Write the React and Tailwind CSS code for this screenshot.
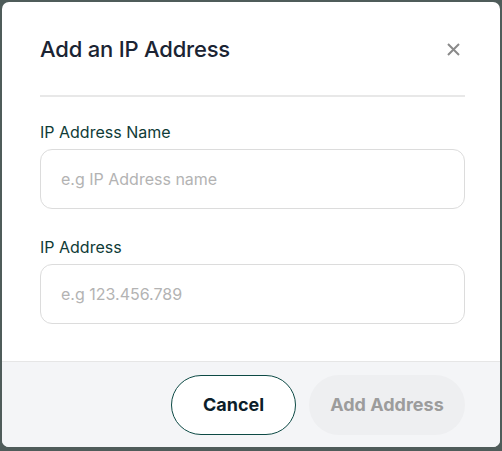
import React from "react";

export default function App() {
  return (
    <div className="w-[502px] h-[451px] bg-[#4f5c5a] p-[2px] font-['Inter',sans-serif]">
      <div className="w-[498px] h-[445px] bg-white rounded-[7px] overflow-hidden flex flex-col">
        <div className="px-[38px] pt-[33px] flex-1">
          <div className="flex items-center justify-between w-[425px]">
            <h2 className="text-[22px] leading-[28px] text-[#1b2433] font-medium tracking-[-0.2px]">Add an IP Address</h2>
            <button className="w-[14px] h-[14px] mr-[5px] flex items-center justify-center text-[#8a8a8a]">
              <svg width="13" height="13" viewBox="0 0 13 13" fill="none" stroke="currentColor" strokeWidth="2">
                <path d="M1 1L12 12M12 1L1 12" />
              </svg>
            </button>
          </div>
          <div className="mt-[32px] h-[2px] bg-[#e8e8e8] w-[425px]" />
          <div className="mt-[25px] flex flex-col gap-[7px] w-[425px]">
            <label className="text-[16px] leading-[20px] text-[#0f3b37]">IP Address Name</label>
            <input
              placeholder="e.g IP Address name"
              className="h-[60px] rounded-[12px] border border-[#dcdcdc] px-[20px] text-[16px] placeholder:text-[#b3b3b3] outline-none"
            />
          </div>
          <div className="mt-[28px] flex flex-col gap-[7px] w-[425px]">
            <label className="text-[16px] leading-[20px] text-[#0f3b37]">IP Address</label>
            <input
              placeholder="e.g 123.456.789"
              className="h-[60px] rounded-[12px] border border-[#dcdcdc] px-[20px] text-[16px] placeholder:text-[#b3b3b3] outline-none"
            />
          </div>
        </div>
        <div className="h-[86px] border-t border-[#e6e6e6] bg-[#f4f5f7] flex items-center justify-end gap-[13px] pr-[35px]">
          <button className="w-[125px] h-[60px] rounded-full border border-[#0d4a45] bg-white text-[18px] font-bold text-[#0c1e2a]">Cancel</button>
          <button className="w-[156px] h-[60px] rounded-full bg-[#eeeff1] text-[18px] font-bold text-[#9c9c9c]">Add Address</button>
        </div>
      </div>
    </div>
  );
}
